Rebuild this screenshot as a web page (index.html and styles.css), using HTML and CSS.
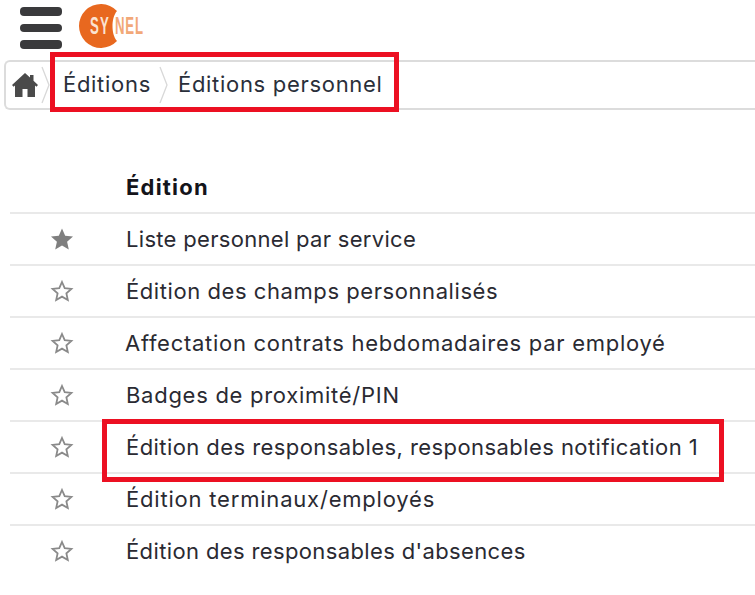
FILE: index.html
```html
<!DOCTYPE html>
<html lang="fr">
<head>
<meta charset="utf-8">
<title>Éditions personnel</title>
<link rel="stylesheet" href="styles.css">
</head>
<body>
<header class="top">
  <div class="burger"><span></span><span></span><span></span></div>
  <div class="logo">
    <svg width="50" height="50" viewBox="0 0 50 50">
      <path d="M39 10.900A22 22 0 1 0 39 41.100C35.500 37 34.500 31 34.500 26C34.500 21 35.500 15 39 10.900Z" fill="#e8681f"/>
    </svg>
    <span class="logo-sy">SY</span><span class="logo-nel">NEL</span>
  </div>
</header>
<nav class="crumbs">
  <div class="home">
    <svg width="28" height="26" viewBox="0 0 28 26"><path d="M14 1L1 13l1.600 1.800L4 13.500V25h7.500v-8h5v8H24V13.500l1.400 1.300L27 13l-4.500-4.200V3h-3.500v2.600z" fill="#4a4a4a"/></svg>
  </div>
  <svg class="sep" width="10" height="46" viewBox="0 0 10 46"><path d="M1 5l7 18-7 18" fill="none" stroke="#d8d8d8" stroke-width="1.300"/></svg>
  <span class="crumb crumb-first">Éditions</span>
  <svg class="sep" width="10" height="46" viewBox="0 0 10 46"><path d="M1 5l7 18-7 18" fill="none" stroke="#d8d8d8" stroke-width="1.300"/></svg>
  <span class="crumb crumb-second">Éditions personnel</span>
</nav>
<main class="list">
  <div class="row head"><span class="star-cell"></span><span class="label">Édition</span></div>
  <div class="row"><span class="star-cell"><svg class="star" viewBox="0 0 24 24"><path class="full" d="M12 1.500l3.200 7.200 7.800.8-5.900 5.200 1.700 7.700-6.800-4-6.800 4 1.700-7.700L1 9.500l7.800-.8z"/></svg></span><span class="label sp-31">Liste personnel par service</span></div>
  <div class="row"><span class="star-cell"><svg class="star" viewBox="0 0 24 24"><path class="empty" d="M12 3l2.700 6.200 6.700.7-5 4.500 1.400 6.600-5.800-3.400-5.800 3.400 1.400-6.600-5-4.500 6.700-.7z"/></svg></span><span class="label sp-57">Édition des champs personnalisés</span></div>
  <div class="row"><span class="star-cell"><svg class="star" viewBox="0 0 24 24"><path class="empty" d="M12 3l2.700 6.200 6.700.7-5 4.500 1.400 6.600-5.800-3.400-5.800 3.400 1.400-6.600-5-4.500 6.700-.7z"/></svg></span><span class="label sp-72 nudge">Affectation contrats hebdomadaires par employé</span></div>
  <div class="row"><span class="star-cell"><svg class="star" viewBox="0 0 24 24"><path class="empty" d="M12 3l2.700 6.200 6.700.7-5 4.500 1.400 6.600-5.800-3.400-5.800 3.400 1.400-6.600-5-4.500 6.700-.7z"/></svg></span><span class="label sp-72">Badges de proximité/PIN</span></div>
  <div class="row"><span class="star-cell"><svg class="star" viewBox="0 0 24 24"><path class="empty" d="M12 3l2.700 6.200 6.700.7-5 4.500 1.400 6.600-5.800-3.400-5.800 3.400 1.400-6.600-5-4.500 6.700-.7z"/></svg></span><span class="label sp-43">Édition des responsables, responsables notification 1</span></div>
  <div class="row"><span class="star-cell"><svg class="star" viewBox="0 0 24 24"><path class="empty" d="M12 3l2.700 6.200 6.700.7-5 4.500 1.400 6.600-5.800-3.400-5.800 3.400 1.400-6.600-5-4.500 6.700-.7z"/></svg></span><span class="label sp-80">Édition terminaux/employés</span></div>
  <div class="row last"><span class="star-cell"><svg class="star" viewBox="0 0 24 24"><path class="empty" d="M12 3l2.700 6.200 6.700.7-5 4.500 1.400 6.600-5.800-3.400-5.800 3.400 1.400-6.600-5-4.500 6.700-.7z"/></svg></span><span class="label sp-37">Édition des responsables d'absences</span></div>
</main>
<div class="mark mark-crumbs"></div>
<div class="mark mark-row"></div>
</body>
</html>
```

FILE: styles.css
```css
html, body {
  margin: 0;
  padding: 0;
  background: #fff;
  overflow: hidden;
}
body {
  width: 755px;
  height: 595px;
  position: relative;
  font-family: Inter, "Open Sans", sans-serif;
  color: #2a2a32;
}
.top {
  height: 60px;
  display: flex;
  align-items: flex-start;
  gap: 16px;
  padding-left: 20px;
  box-sizing: border-box;
}
.burger {
  width: 42px;
  padding-top: 7px;
  display: flex;
  flex-direction: column;
  gap: 8px;
}
.burger span {
  display: block;
  height: 8.500px;
  background: #3a3a3c;
  border-radius: 4px;
}
.logo {
  position: relative;
  width: 70px;
  height: 50px;
}
.logo svg { display: block; }
.logo-sy, .logo-nel {
  position: absolute;
  top: 12px;
  font-family: "Liberation Sans", sans-serif;
  font-weight: 700;
  font-size: 24px;
  line-height: 28px;
  transform: scaleX(.55);
  transform-origin: left center;
}
.logo-sy { left: 12px; color: #fbe3d2; letter-spacing: 2px; }
.logo-nel { left: 37px; color: #f2a878; letter-spacing: 1.500px; }
.crumbs {
  height: 50px;
  margin-left: 4px;
  display: flex;
  align-items: center;
  border: 2px solid #dcdcdc;
  border-right: 0;
  border-radius: 6px 0 0 6px;
  box-sizing: border-box;
}
.home {
  width: 35px;
  padding-left: 5px;
  box-sizing: border-box;
  display: flex;
}
.sep { flex: none; }
.crumb {
  font-size: 22px;
  letter-spacing: .7px;
  color: #2a2f3a;
  white-space: nowrap;
  margin-bottom: 2px;
}
.crumb-first { padding: 0 8px 0 12px; }
.crumb-second { padding-left: 9px; }
.list {
  margin: 52px 0 0 10px;
}
.row {
  display: flex;
  align-items: center;
  height: 52px;
  border-bottom: 2px solid #e9e9e9;
  box-sizing: border-box;
}
.row.head { font-weight: 700; color: #14141a; }
.row.head .label { letter-spacing: 1.200px; }
.row.last { border-bottom: 0; height: 50px; }
.star-cell {
  width: 116px;
  display: flex;
  padding-left: 40px;
  box-sizing: border-box;
}
.star { width: 24px; height: 24px; }
.full { fill: #7f7f7f; }
.empty { fill: #fff; stroke: #8a8a8a; stroke-width: 1.800; }
.label {
  font-size: 22px;
  letter-spacing: .2px;
  white-space: nowrap;
}
.nudge { margin-left: -1px; }
.sp-31 { letter-spacing: .31px; }
.sp-37 { letter-spacing: .37px; }
.sp-43 { letter-spacing: .43px; }
.sp-57 { letter-spacing: .57px; }
.sp-72 { letter-spacing: .72px; }
.sp-80 { letter-spacing: .8px; }
.mark {
  position: absolute;
  border: 5px solid #ec1022;
  box-sizing: border-box;
}
.mark-crumbs { left: 50px; top: 52px; width: 349px; height: 60px; }
.mark-row { left: 102px; top: 419px; width: 622px; height: 63px; }
```
